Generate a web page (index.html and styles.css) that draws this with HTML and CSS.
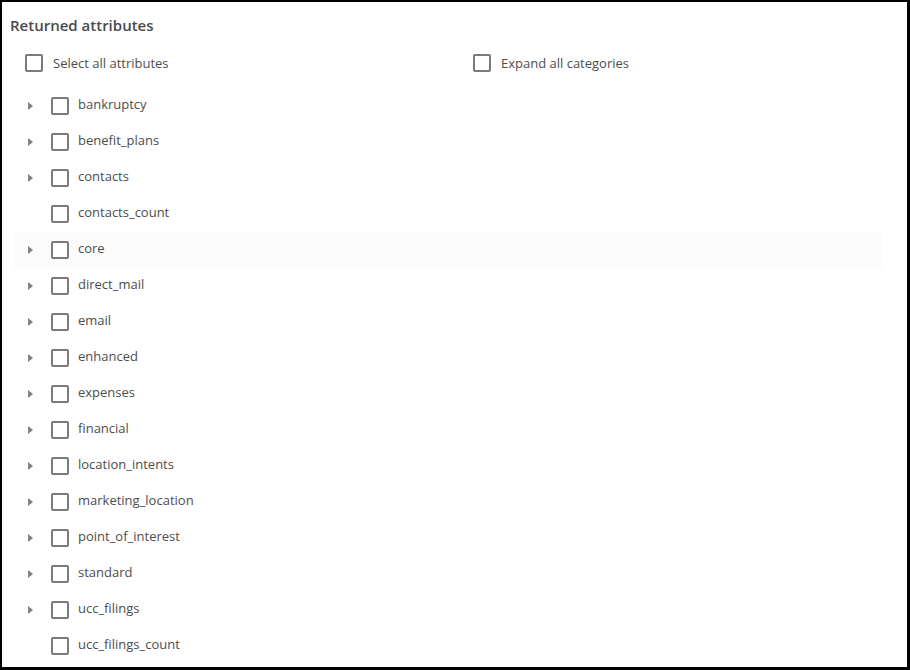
FILE: index.html
```html
<!DOCTYPE html>
<html>
<head>
<meta charset="utf-8">
<link rel="stylesheet" href="styles.css">
</head>
<body>
<div class="frame">
  <div class="title">Returned attributes</div>
  <div class="options">
    <label class="opt"><span class="box"></span><span class="lbl">Select all attributes</span></label>
    <label class="opt"><span class="box"></span><span class="lbl">Expand all categories</span></label>
  </div>
  <ul class="list">
    <li class="row"><svg class="caret" width="5" height="8" viewBox="0 0 5 8"><polygon points="0,0 5,4 0,8"/></svg><span class="box"></span><span class="name">bankruptcy</span></li>
    <li class="row"><svg class="caret" width="5" height="8" viewBox="0 0 5 8"><polygon points="0,0 5,4 0,8"/></svg><span class="box"></span><span class="name">benefit_plans</span></li>
    <li class="row"><svg class="caret" width="5" height="8" viewBox="0 0 5 8"><polygon points="0,0 5,4 0,8"/></svg><span class="box"></span><span class="name">contacts</span></li>
    <li class="row"><svg class="caret hidden" width="5" height="8" viewBox="0 0 5 8"><polygon points="0,0 5,4 0,8"/></svg><span class="box"></span><span class="name">contacts_count</span></li>
    <li class="row hover"><svg class="caret" width="5" height="8" viewBox="0 0 5 8"><polygon points="0,0 5,4 0,8"/></svg><span class="box"></span><span class="name">core</span></li>
    <li class="row"><svg class="caret" width="5" height="8" viewBox="0 0 5 8"><polygon points="0,0 5,4 0,8"/></svg><span class="box"></span><span class="name">direct_mail</span></li>
    <li class="row"><svg class="caret" width="5" height="8" viewBox="0 0 5 8"><polygon points="0,0 5,4 0,8"/></svg><span class="box"></span><span class="name">email</span></li>
    <li class="row"><svg class="caret" width="5" height="8" viewBox="0 0 5 8"><polygon points="0,0 5,4 0,8"/></svg><span class="box"></span><span class="name">enhanced</span></li>
    <li class="row"><svg class="caret" width="5" height="8" viewBox="0 0 5 8"><polygon points="0,0 5,4 0,8"/></svg><span class="box"></span><span class="name">expenses</span></li>
    <li class="row"><svg class="caret" width="5" height="8" viewBox="0 0 5 8"><polygon points="0,0 5,4 0,8"/></svg><span class="box"></span><span class="name">financial</span></li>
    <li class="row"><svg class="caret" width="5" height="8" viewBox="0 0 5 8"><polygon points="0,0 5,4 0,8"/></svg><span class="box"></span><span class="name">location_intents</span></li>
    <li class="row"><svg class="caret" width="5" height="8" viewBox="0 0 5 8"><polygon points="0,0 5,4 0,8"/></svg><span class="box"></span><span class="name">marketing_location</span></li>
    <li class="row"><svg class="caret" width="5" height="8" viewBox="0 0 5 8"><polygon points="0,0 5,4 0,8"/></svg><span class="box"></span><span class="name">point_of_interest</span></li>
    <li class="row"><svg class="caret" width="5" height="8" viewBox="0 0 5 8"><polygon points="0,0 5,4 0,8"/></svg><span class="box"></span><span class="name">standard</span></li>
    <li class="row"><svg class="caret" width="5" height="8" viewBox="0 0 5 8"><polygon points="0,0 5,4 0,8"/></svg><span class="box"></span><span class="name">ucc_filings</span></li>
    <li class="row"><svg class="caret hidden" width="5" height="8" viewBox="0 0 5 8"><polygon points="0,0 5,4 0,8"/></svg><span class="box"></span><span class="name">ucc_filings_count</span></li>
  </ul>
</div>
</body>
</html>
```

FILE: styles.css
```css
* { box-sizing: border-box; }
html, body { margin: 0; padding: 0; background: #fff; }
body {
  font-family: "Open Sans", "Noto Sans", sans-serif;
  color: #4d4d4d;
}
.frame {
  width: 910px;
  height: 670px;
  border-style: solid;
  border-color: #000;
  border-width: 2px 3px 3px 2px;
  padding: 13px 0 0 8px;
  overflow: hidden;
}
.title {
  font-size: 15px;
  font-weight: 600;
  line-height: 20px;
  color: #4a4a4a;
}
.options {
  display: grid;
  grid-template-columns: 448px 1fr;
  margin-top: 14px;
  padding-left: 15px;
  height: 28px;
}
.opt {
  display: flex;
  align-items: center;
  gap: 10px;
  font-size: 13px;
}
.box {
  display: inline-block;
  width: 18px;
  height: 18px;
  border: 2px solid #7a7a7a;
  border-radius: 2px;
  flex: none;
  background: #fff;
}
.lbl { color: #4d4d4d; }
.list {
  list-style: none;
  margin: 11px 0 0 4px;
  padding: 0;
  width: 868px;
}
.row {
  display: flex;
  align-items: center;
  height: 36px;
  padding-left: 13px;
  font-size: 13px;
}
.row.hover { background: #fbfbfb; }
.caret {
  fill: #808080;
  flex: none;
  margin-right: 19px;
  position: relative;
  left: 1px;
}
.caret.hidden { visibility: hidden; }
.name {
  margin-left: 9px;
  color: #4d4d4d;
  position: relative;
  top: -2px;
}
```
